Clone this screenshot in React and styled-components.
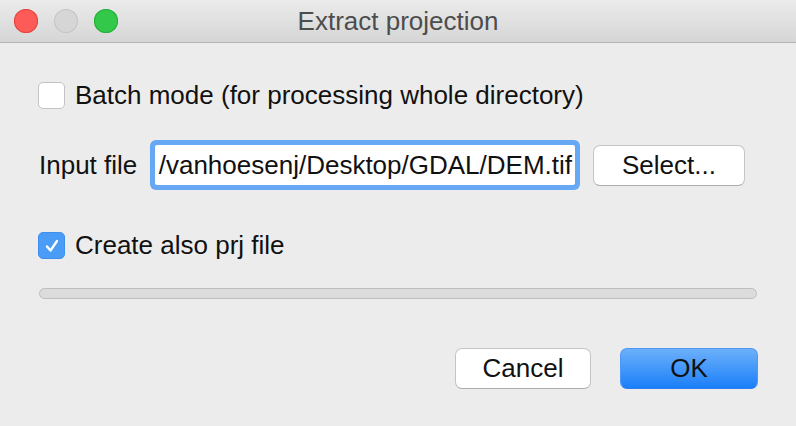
import React from 'react';
import styled, { createGlobalStyle } from 'styled-components';

const Global = createGlobalStyle`
  html, body {
    margin: 0;
    padding: 0;
    background: #ececec;
  }
  body {
    font-family: "Liberation Sans", Arial, sans-serif;
  }
`;

const Window = styled.div`
  width: 796px;
  height: 426px;
  background: #ececec;
  display: flex;
  flex-direction: column;
  overflow: hidden;
`;

const TitleBar = styled.div`
  height: 42px;
  flex: none;
  display: flex;
  align-items: center;
  position: relative;
  background: linear-gradient(#ebebeb, #d6d6d6);
  border-bottom: 1px solid #b3b3b3;
  padding-left: 14px;
  gap: 16px;
`;

const Light = styled.span`
  width: 24px;
  height: 24px;
  border-radius: 50%;
  background: ${props => props.color};
  box-shadow: inset 0 0 0 1px ${props => props.edge};
`;

const Title = styled.div`
  position: absolute;
  left: 0;
  right: 0;
  top: 0;
  bottom: 0;
  display: flex;
  align-items: center;
  justify-content: center;
  font-size: 26px;
  color: #4d4d4d;
  pointer-events: none;
`;

const Body = styled.div`
  flex: 1;
  display: flex;
  flex-direction: column;
  padding: 39px 38px 0 38px;
`;

const CheckRow = styled.label`
  display: flex;
  align-items: center;
  gap: 10px;
  height: 27px;
  font-size: 26px;
  color: #111;
  margin-top: ${props => props.top || 0}px;
`;

const Box = styled.span`
  width: 27px;
  height: 27px;
  box-sizing: border-box;
  border-radius: 5px;
  flex: none;
  display: flex;
  align-items: center;
  justify-content: center;
  background: ${props => (props.checked ? '#4b9cf6' : '#fff')};
  border: 1px solid ${props => (props.checked ? '#3e8ff0' : '#c3c3c3')};
`;

const InputRow = styled.div`
  display: flex;
  align-items: center;
  height: 50px;
  margin-top: 31px;
`;

const Label = styled.span`
  font-size: 26px;
  color: #111;
  margin-left: 1px;
  width: 116px;
  flex: none;
`;

const Field = styled.div`
  width: 420px;
  height: 40px;
  box-sizing: border-box;
  background: #fff;
  border-radius: 2px;
  box-shadow: 0 0 0 5px #66a8f3;
  display: flex;
  justify-content: flex-end;
  align-items: center;
  overflow: hidden;
  white-space: nowrap;
  font-size: 26px;
  color: #111;
  padding-right: 3px;
  flex: none;
`;

const Button = styled.button`
  font-family: "Liberation Sans", Arial, sans-serif;
  font-size: 26px;
  color: #111;
  width: ${props => props.w}px;
  height: 41px;
  box-sizing: border-box;
  border-radius: 7px;
  border: 1px solid ${props => (props.primary ? '#4d98f5' : '#c4c4c4')};
  border-bottom-color: ${props => (props.primary ? '#2a7ef2' : '#acacac')};
  background: ${props =>
    props.primary ? 'linear-gradient(#6cb0fa, #1b7ff8)' : '#fff'};
  margin-left: ${props => props.gap || 0}px;
  padding: 0;
  flex: none;
`;

const Progress = styled.div`
  height: 11px;
  margin: 29px 1px 0 1px;
  box-sizing: border-box;
  border: 1px solid #bebebe;
  border-radius: 6px;
  background: #dcdcdc;
`;

const Footer = styled.div`
  display: flex;
  justify-content: flex-end;
  margin-top: 49px;
`;

const Check = () => (
  <svg width="18" height="16" viewBox="0 0 18 16">
    <path d="M4 8.5 L7.5 12.5 L14 3" fill="none" stroke="#fff" strokeWidth="2.4" strokeLinecap="round" strokeLinejoin="round" />
  </svg>
);

export default function App() {
  return (
    <Window>
      <Global />
      <TitleBar>
        <Light color="#fc5b57" edge="#e3433f" />
        <Light color="#d6d6d6" edge="#c5c5c5" />
        <Light color="#34c84a" edge="#24ae37" />
        <Title>Extract projection</Title>
      </TitleBar>
      <Body>
        <CheckRow>
          <Box />
          Batch mode (for processing whole directory)
        </CheckRow>
        <InputRow>
          <Label>Input file</Label>
          <Field>/vanhoesenj/Desktop/GDAL/DEM.tif</Field>
          <Button w={152} gap={18}>Select...</Button>
        </InputRow>
        <CheckRow top={42}>
          <Box checked>
            <Check />
          </Box>
          Create also prj file
        </CheckRow>
        <Progress />
        <Footer>
          <Button w={136}>Cancel</Button>
          <Button w={138} primary gap={29}>OK</Button>
        </Footer>
      </Body>
    </Window>
  );
}
